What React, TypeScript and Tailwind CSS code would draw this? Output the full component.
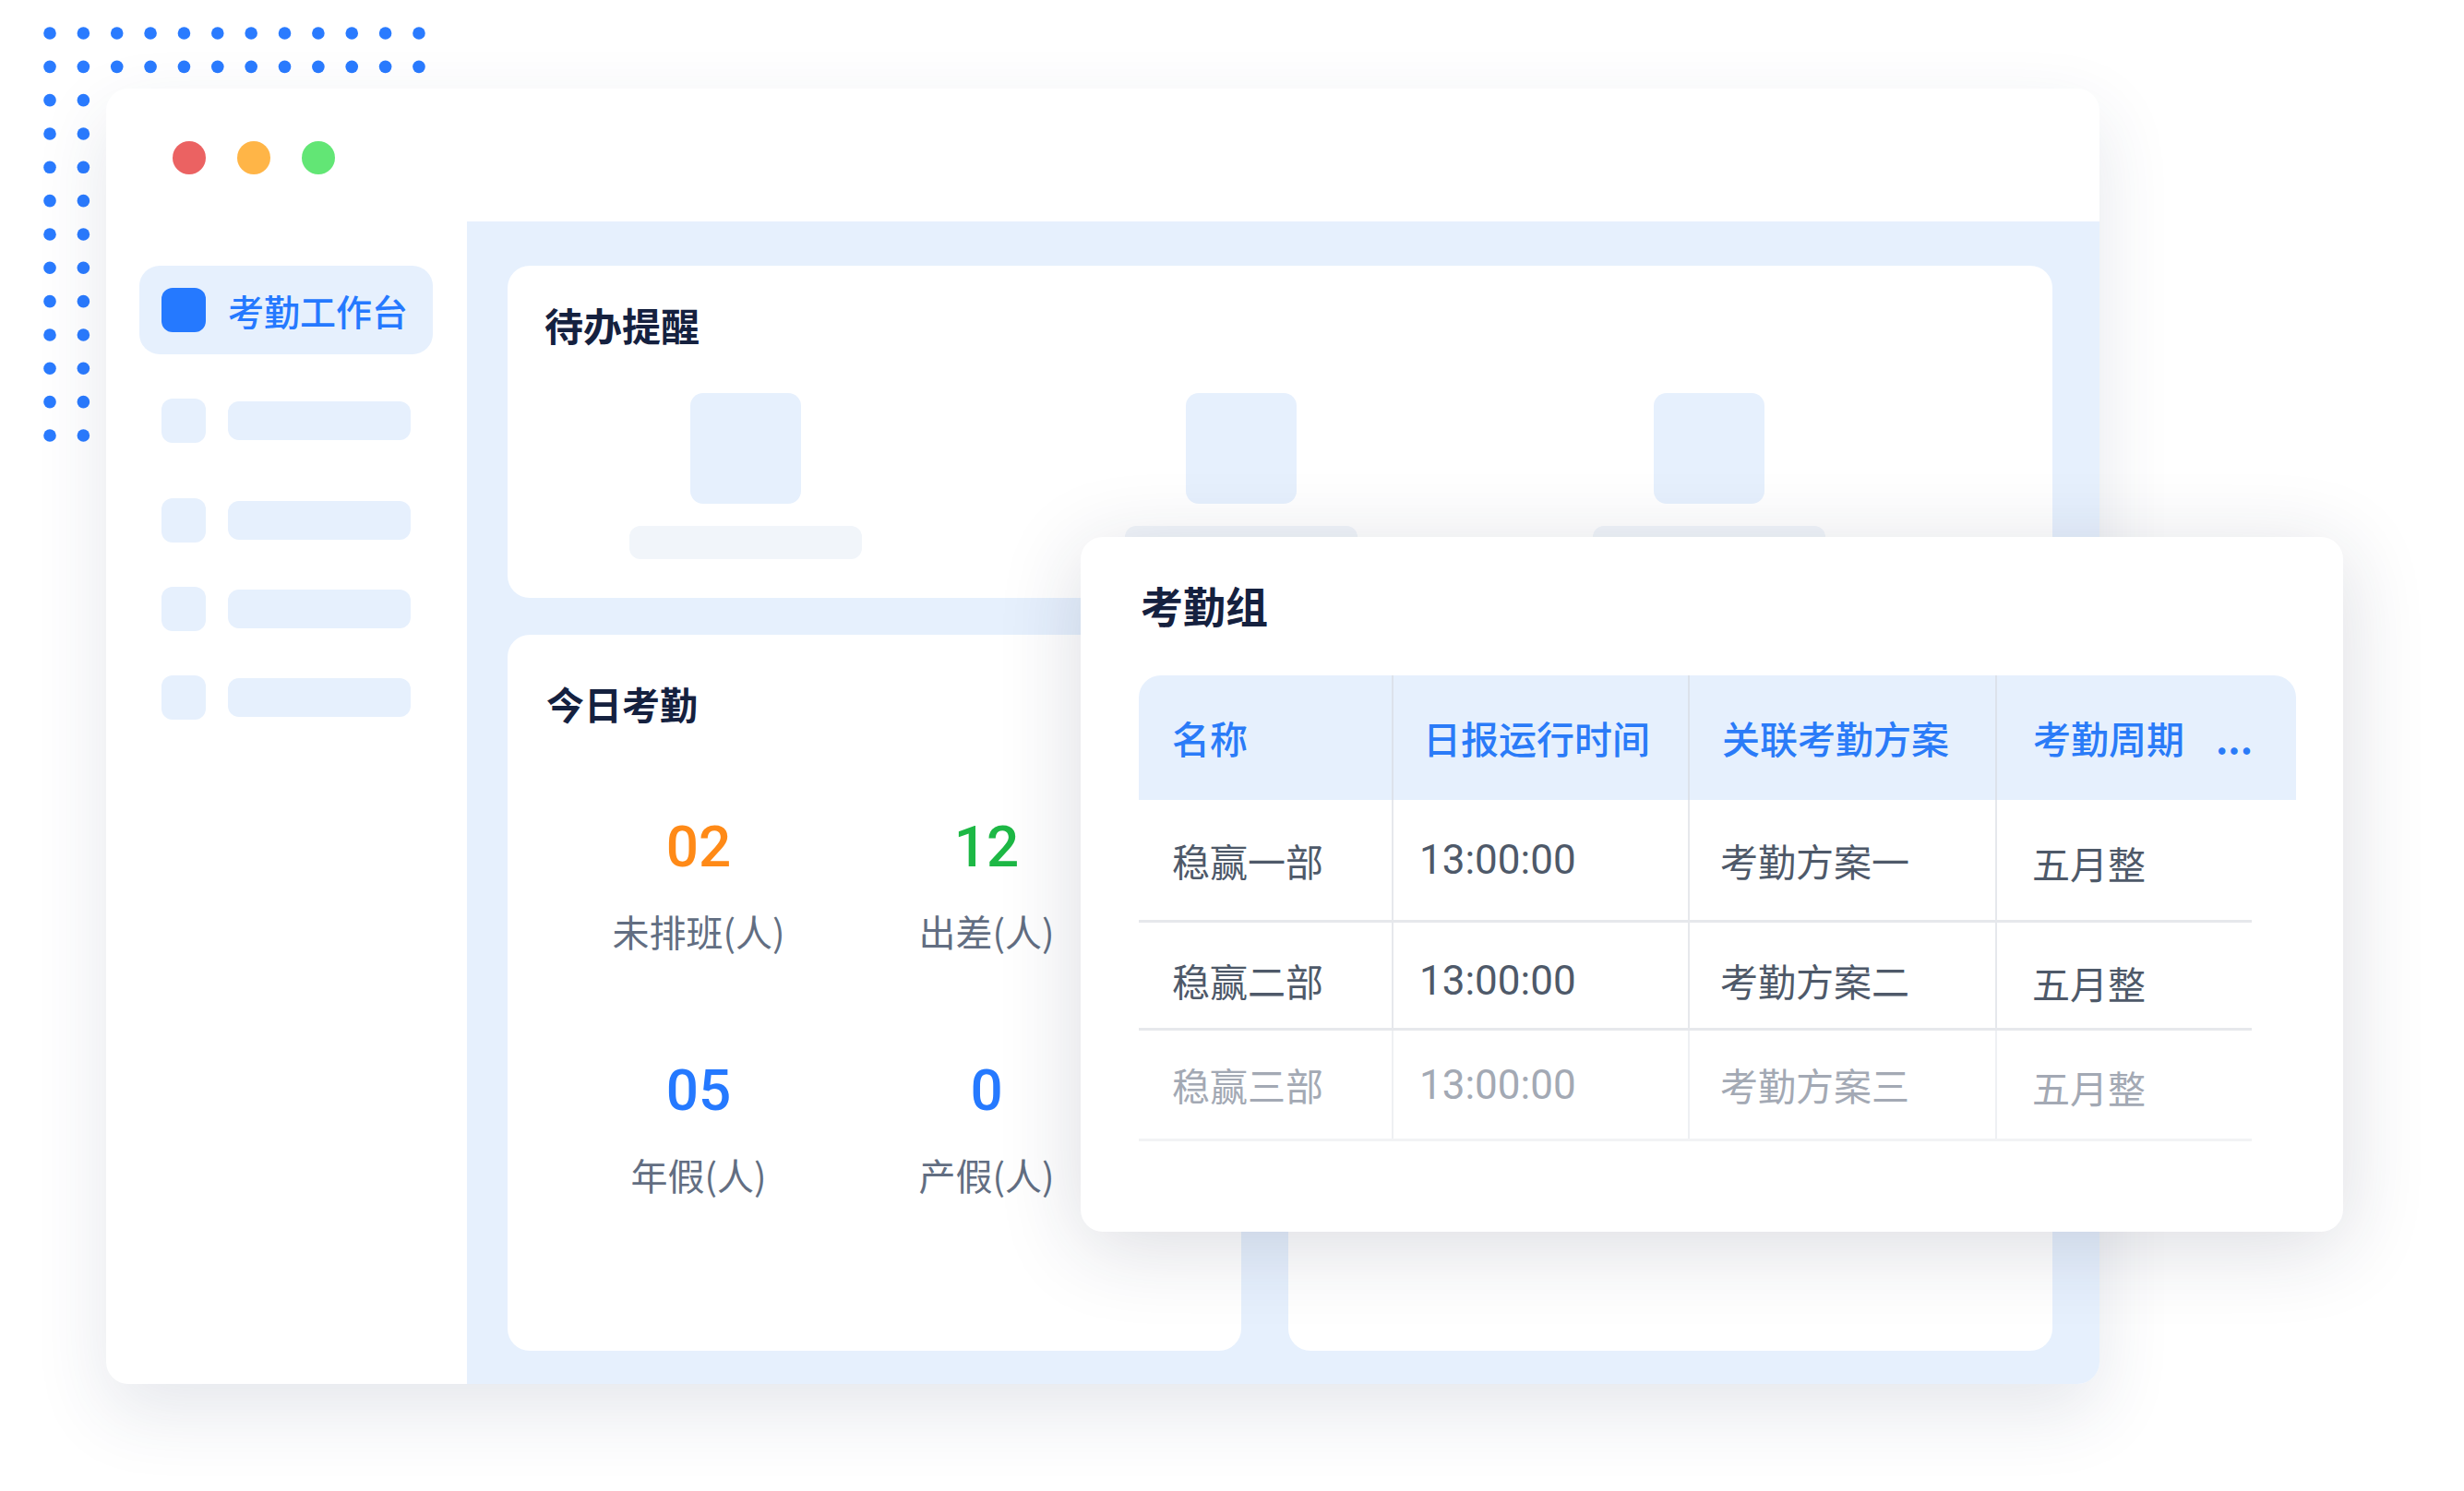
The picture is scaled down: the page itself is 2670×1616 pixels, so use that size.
import React from "react";

const DOT_X = Array.from({ length: 12 }, (_, i) => 54 + i * 36.36);
const DOT_Y = Array.from({ length: 13 }, (_, j) => 36 + j * 36.33);

function Dots() {
  const circles: React.ReactNode[] = [];
  DOT_Y.forEach((cy, j) => {
    const cols = j < 2 ? DOT_X : DOT_X.slice(0, 2);
    cols.forEach((cx, i) => {
      circles.push(<circle key={`${i}-${j}`} cx={cx} cy={cy} r={6.8} fill="#2A7BFF" />);
    });
  });
  return (
    <svg className="absolute left-0 top-0" width={470} height={490} viewBox="0 0 470 490">
      {circles}
    </svg>
  );
}

function SkeletonItem({ className = "" }: { className?: string }) {
  return (
    <div className={`flex h-[48px] items-center ${className}`}>
      <div className="h-[48px] w-[48px] rounded-[12px] bg-[#E6F0FD]" />
      <div className="ml-[24px] h-[42px] w-[198px] rounded-[12px] bg-[#E6F0FD]" />
    </div>
  );
}

function TodoCol({ className = "" }: { className?: string }) {
  return (
    <div className={`flex w-[252px] flex-col items-center ${className}`}>
      <div className="h-[120px] w-[120px] rounded-[14px] bg-[#E6F0FD]" />
      <div className="mt-[24px] h-[36px] w-[252px] rounded-[12px] bg-[#F1F5FA]" />
    </div>
  );
}

function Stat({ value, color, label }: { value: string; color: string; label: string }) {
  return (
    <div className="flex flex-col items-center">
      <div className={`font-['Roboto',sans-serif] text-[62px] font-medium leading-none ${color}`}>{value}</div>
      <div className="mt-[40px] text-[40px] leading-none text-[#626E82]">{label}</div>
    </div>
  );
}

type Row = { name: string; time: string; plan: string; cycle: string };

const rows: Row[] = [
  { name: "稳赢一部", time: "13:00:00", plan: "考勤方案一", cycle: "五月整" },
  { name: "稳赢二部", time: "13:00:00", plan: "考勤方案二", cycle: "五月整" },
  { name: "稳赢三部", time: "13:00:00", plan: "考勤方案三", cycle: "五月整" },
];

function TableRow({ row, index }: { row: Row; index: number }) {
  const faded = index === 2;
  const text = faded ? "text-[#A3A9B4]" : "text-[#4E5969]";
  const vline = faded ? "border-[#EEF0F3]" : "border-[#E6E8EC]";
  const heights = ["h-[133px]", "h-[117px]", "h-[120px]"];
  const pad = ["", "pt-[11px]", ""];
  const pad4 = ["pt-[6px]", "pt-[17px]", "pt-[6px]"];
  const bline = faded ? "border-[#F2F3F5]" : "border-[#E6E8EC]";
  return (
    <div className={`flex w-[1206px] border-b-[3px] ${bline} ${heights[index]} ${text}`}>
      <div className={`flex w-[274px] items-center pl-[36px] text-[41px] leading-none ${pad[index]}`}>{row.name}</div>
      <div
        className={`flex w-[321px] items-center border-l-2 ${vline} pl-[28px] font-['Roboto',sans-serif] text-[44px] leading-none ${pad[index]}`}
      >
        {row.time}
      </div>
      <div className={`flex w-[333px] items-center border-l-2 ${vline} pl-[33px] text-[41px] leading-none ${pad[index]}`}>
        {row.plan}
      </div>
      <div className={`flex w-[278px] items-center border-l-2 ${vline} pl-[38px] text-[41px] leading-none ${pad4[index]}`}>
        {row.cycle}
      </div>
    </div>
  );
}

export default function App() {
  return (
    <div className="relative h-[1616px] w-[2670px] overflow-hidden bg-white pl-[115px] pt-[96px] font-['Noto_Sans_CJK_SC',sans-serif]">
      <Dots />

      {/* Window */}
      <div className="relative flex h-[1404px] w-[2160px] flex-col rounded-[24px] bg-white shadow-[0_30px_80px_rgba(40,60,100,0.12)]">
        <div className="flex h-[144px] items-start gap-[34px] pl-[72px] pt-[57px]">
          <div className="h-[36px] w-[36px] rounded-full bg-[#EB6262]" />
          <div className="h-[36px] w-[36px] rounded-full bg-[#FFB547]" />
          <div className="h-[36px] w-[36px] rounded-full bg-[#62E675]" />
        </div>

        <div className="flex flex-1">
          <aside className="w-[391px] pl-[36px] pt-[48px]">
            <div className="flex h-[96px] w-[318px] items-center rounded-[22px] bg-[#E6F0FD] pl-[24px]">
              <div className="h-[48px] w-[48px] rounded-[12px] bg-[#2579FF]" />
              <span className="ml-[24px] text-[39px] font-medium leading-none text-[#2579FF]">考勤工作台</span>
            </div>
            <div className="mt-[48px] flex flex-col pl-[24px]">
              <SkeletonItem />
              <SkeletonItem className="mt-[60px]" />
              <SkeletonItem className="mt-[48px]" />
              <SkeletonItem className="mt-[48px]" />
            </div>
          </aside>

          <main className="flex-1 rounded-br-[24px] bg-[#E6F0FD] pl-[44px] pt-[48px]">
            <section className="h-[360px] w-[1674px] rounded-[24px] bg-white">
              <div className="pl-[40px] pt-[43px] text-[42px] font-bold leading-none text-[#15213F]">待办提醒</div>
              <div className="mt-[53px] flex pl-[132px]">
                <TodoCol />
                <TodoCol className="ml-[285px]" />
                <TodoCol className="ml-[255px]" />
              </div>
            </section>

            <div className="mt-[40px] flex gap-[51px]">
              <section className="h-[776px] w-[795px] rounded-[24px] bg-white">
                <div className="pl-[42px] pt-[54px] text-[41px] font-bold leading-none text-[#15213F]">今日考勤</div>
                <div className="mt-[104px] grid grid-cols-[312px_312px] gap-y-[122px] pl-[51px]">
                  <Stat value="02" color="text-[#FF8A17]" label="未排班(人)" />
                  <Stat value="12" color="text-[#1DB845]" label="出差(人)" />
                  <Stat value="05" color="text-[#2579FF]" label="年假(人)" />
                  <Stat value="0" color="text-[#2579FF]" label="产假(人)" />
                </div>
              </section>
              <section className="h-[776px] w-[828px] rounded-[24px] bg-white" />
            </div>
          </main>
        </div>
      </div>

      {/* Floating card */}
      <div className="absolute left-[1171px] top-[582px] h-[753px] w-[1368px] rounded-[24px] bg-white shadow-[0_16px_90px_rgba(30,40,70,0.16)]">
        <div className="pl-[65px] pt-[50px] text-[46px] font-bold leading-none text-[#15213F]">考勤组</div>
        <div className="ml-[63px] mt-[54px]">
          <div className="flex h-[135px] w-[1254px] rounded-t-[24px] bg-[#E6F0FD] text-[41px] font-medium leading-none text-[#2A7BF8]">
            <div className="flex w-[274px] items-center pl-[36px]">名称</div>
            <div className="flex w-[321px] items-center border-l-2 border-[#DCE2EB] pl-[32px]">日报运行时间</div>
            <div className="flex w-[333px] items-center border-l-2 border-[#DCE2EB] pl-[35px]">关联考勤方案</div>
            <div className="flex w-[326px] items-center border-l-2 border-[#DCE2EB] pl-[39px]">
              考勤周期<span className="ml-[34px] font-bold">...</span>
            </div>
          </div>
          {rows.map((r, i) => (
            <TableRow key={r.name} row={r} index={i} />
          ))}
        </div>
      </div>
    </div>
  );
}
